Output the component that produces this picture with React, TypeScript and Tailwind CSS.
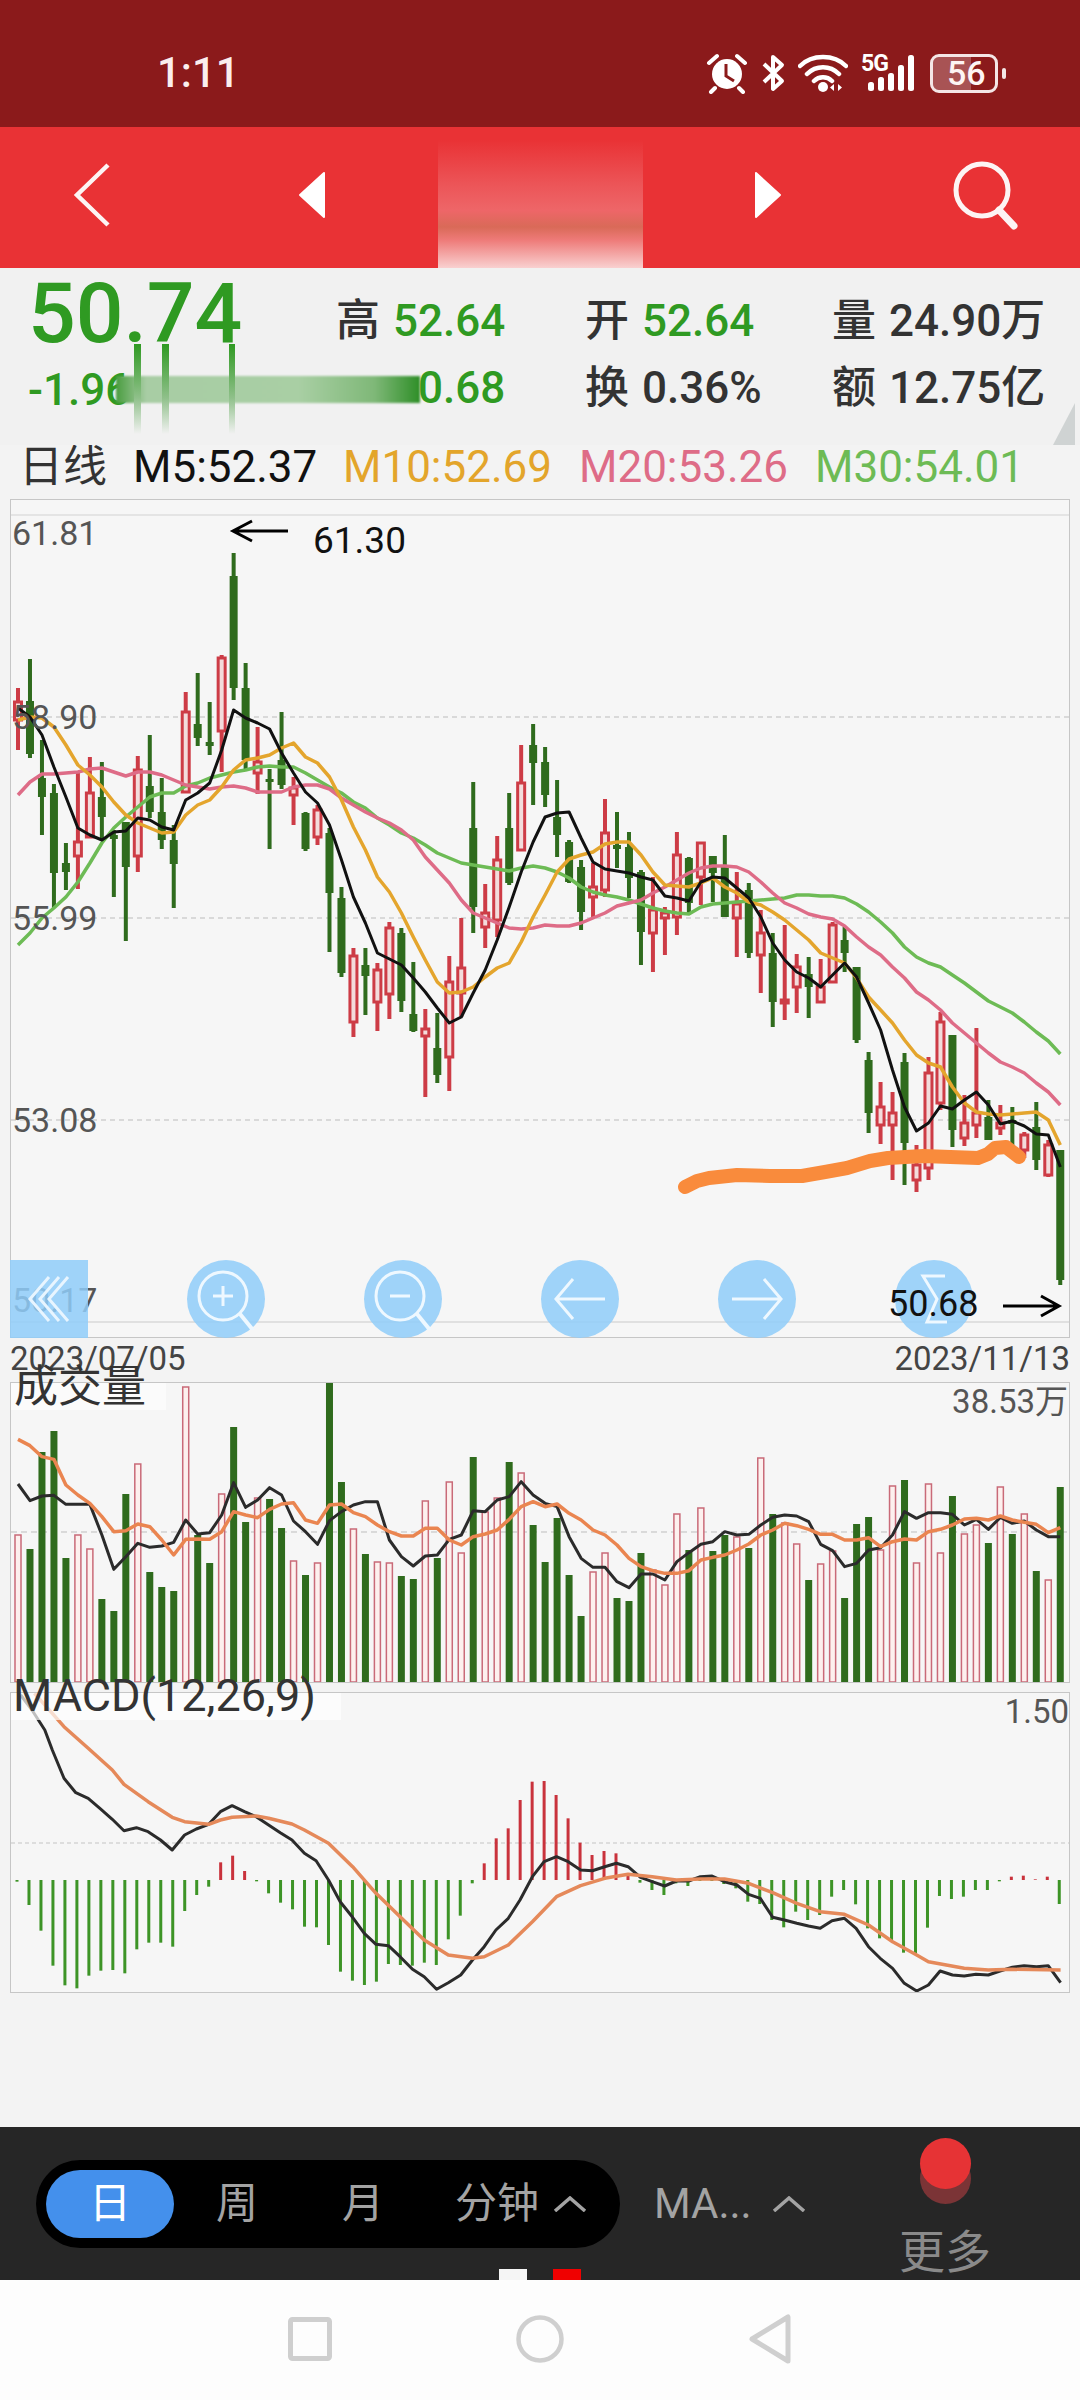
const candles: [string, number, number, number, number][] = [
  ["r", 688, 702, 720, 750], ["g", 659, 701, 754, 758], ["g", 740, 778, 797, 835], ["g", 784, 793, 873, 908],
  ["g", 843, 863, 872, 890], ["r", 773, 842, 856, 889], ["r", 757, 793, 837, 838], ["g", 762, 797, 817, 840],
  ["g", 830, 835, 839, 897], ["g", 822, 822, 867, 941], ["r", 756, 770, 856, 872], ["g", 735, 786, 812, 818],
  ["g", 778, 812, 840, 849], ["g", 825, 840, 864, 908], ["r", 692, 712, 792, 793], ["g", 673, 724, 738, 746],
  ["g", 702, 742, 746, 755], ["r", 655, 658, 731, 772], ["g", 553, 576, 688, 700], ["g", 663, 688, 760, 769],
  ["r", 727, 762, 773, 794], ["g", 769, 779, 782, 849], ["g", 712, 760, 785, 789], ["r", 777, 788, 795, 825],
  ["g", 812, 813, 849, 851], ["r", 805, 810, 837, 845], ["g", 828, 833, 893, 952], ["g", 887, 898, 973, 977],
  ["r", 948, 956, 1022, 1037], ["g", 948, 965, 976, 1015], ["r", 963, 970, 1002, 1031], ["r", 922, 928, 994, 1019],
  ["g", 928, 933, 1001, 1012], ["g", 962, 1014, 1031, 1032], ["r", 1009, 1029, 1036, 1097], ["g", 1013, 1048, 1075, 1083],
  ["r", 956, 982, 1057, 1091], ["r", 918, 968, 993, 1017], ["g", 782, 828, 907, 933], ["r", 884, 913, 927, 948],
  ["r", 836, 860, 920, 937], ["g", 793, 828, 883, 885], ["r", 745, 783, 850, 850], ["g", 724, 745, 763, 805],
  ["g", 747, 762, 795, 807], ["g", 780, 817, 835, 857], ["g", 840, 842, 882, 883], ["g", 860, 867, 912, 930],
  ["r", 863, 887, 897, 917], ["r", 799, 833, 890, 897], ["g", 812, 845, 849, 868], ["g", 832, 847, 878, 898],
  ["g", 870, 872, 932, 965], ["r", 877, 910, 933, 972], ["r", 907, 913, 918, 955], ["r", 832, 855, 917, 935],
  ["g", 857, 858, 903, 915], ["r", 842, 843, 877, 905], ["g", 856, 856, 873, 902], ["g", 835, 867, 917, 917],
  ["r", 872, 904, 918, 957], ["g", 883, 890, 953, 958], ["r", 910, 933, 955, 993], ["g", 933, 953, 1002, 1027],
  ["r", 925, 1000, 1003, 1020], ["r", 954, 967, 987, 1013], ["g", 957, 974, 987, 1018], ["r", 959, 987, 1002, 1002],
  ["r", 922, 925, 982, 982], ["g", 927, 940, 953, 972], ["g", 967, 967, 1040, 1043], ["g", 1052, 1060, 1113, 1133],
  ["r", 1082, 1107, 1125, 1144], ["r", 1092, 1113, 1125, 1180], ["g", 1053, 1062, 1143, 1185], ["r", 1145, 1165, 1180, 1192],
  ["r", 1057, 1073, 1168, 1180], ["r", 1012, 1022, 1103, 1110], ["g", 1035, 1035, 1130, 1147], ["r", 1095, 1123, 1138, 1146],
  ["r", 1028, 1113, 1125, 1138], ["g", 1100, 1117, 1140, 1140], ["r", 1105, 1123, 1128, 1135], ["g", 1107, 1120, 1124, 1153],
  ["r", 1132, 1135, 1150, 1158], ["g", 1102, 1127, 1160, 1170], ["r", 1140, 1145, 1175, 1177], ["g", 1150, 1150, 1280, 1285],
];

const ma5 = [708, 717, 735, 767, 797, 828, 835, 840, 832, 831, 818, 820, 827, 830, 800, 793, 783, 750, 710, 718, 723, 729, 753, 773, 792, 803, 825, 860, 897, 923, 953, 959, 965, 978, 992, 1008, 1023, 1017, 993, 970, 940, 907, 872, 842, 817, 813, 812, 838, 862, 869, 871, 873, 877, 880, 896, 898, 901, 882, 877, 878, 888, 898, 917, 943, 960, 972, 978, 987, 975, 963, 977, 1003, 1030, 1070, 1107, 1131, 1123, 1106, 1109, 1100, 1092, 1105, 1124, 1121, 1126, 1134, 1135, 1167];
const ma10 = [720, 717, 718, 727, 745, 765, 775, 787, 802, 815, 823, 828, 833, 832, 815, 805, 800, 787, 770, 760, 758, 755, 748, 743, 757, 763, 777, 800, 827, 850, 877, 892, 913, 937, 960, 982, 993, 992, 987, 977, 968, 963, 942, 917, 895, 872, 859, 855, 852, 844, 842, 842, 855, 872, 885, 886, 887, 883, 878, 887, 893, 902, 905, 912, 920, 930, 940, 953, 958, 963, 978, 997, 1010, 1023, 1040, 1055, 1063, 1067, 1087, 1103, 1112, 1114, 1115, 1114, 1113, 1112, 1120, 1145];
const ma20 = [795, 782, 774, 774, 773, 772, 769, 768, 772, 776, 772, 772, 775, 780, 785, 787, 789, 787, 786, 788, 792, 792, 792, 787, 785, 785, 789, 798, 805, 812, 818, 823, 830, 840, 857, 870, 883, 900, 913, 918, 923, 928, 929, 928, 925, 926, 926, 923, 918, 913, 906, 903, 900, 893, 887, 880, 873, 868, 866, 866, 867, 872, 882, 893, 903, 908, 914, 917, 919, 926, 937, 947, 955, 967, 978, 992, 1000, 1010, 1023, 1033, 1043, 1053, 1062, 1067, 1073, 1083, 1092, 1105];
const ma30 = [945, 933, 918, 908, 897, 882, 863, 843, 828, 817, 807, 797, 793, 793, 786, 783, 778, 775, 772, 770, 767, 766, 767, 767, 773, 780, 787, 793, 802, 808, 818, 825, 833, 838, 845, 853, 858, 863, 865, 867, 869, 871, 868, 866, 868, 872, 878, 887, 892, 895, 897, 900, 904, 908, 911, 913, 914, 907, 904, 903, 902, 901, 900, 899, 898, 895, 895, 896, 896, 898, 904, 912, 922, 933, 947, 957, 963, 967, 975, 983, 992, 1001, 1007, 1013, 1022, 1032, 1041, 1054];

const volTops = [1535, 1549, 1452, 1431, 1558, 1535, 1549, 1599, 1611, 1494, 1464, 1572, 1587, 1591, 1387, 1535, 1563, 1494, 1427, 1522, 1498, 1499, 1528, 1561, 1575, 1563, 1382, 1482, 1529, 1554, 1562, 1563, 1576, 1579, 1501, 1558, 1482, 1553, 1457, 1512, 1498, 1462, 1473, 1525, 1562, 1518, 1575, 1616, 1572, 1553, 1598, 1601, 1553, 1570, 1585, 1514, 1550, 1508, 1551, 1535, 1537, 1548, 1458, 1514, 1523, 1544, 1580, 1564, 1551, 1598, 1524, 1517, 1550, 1486, 1480, 1563, 1484, 1553, 1496, 1534, 1525, 1543, 1487, 1534, 1514, 1571, 1580, 1487];
const volBlack = [372, 422, 408, 406, 433, 433, 433, 525, 628, 590, 550, 562, 558, 547, 480, 522, 518, 465, 368, 442, 420, 383, 405, 483, 515, 553, 482, 455, 435, 425, 425, 540, 590, 618, 588, 585, 538, 525, 452, 455, 420, 410, 365, 405, 430, 440, 530, 595, 622, 622, 665, 683, 642, 642, 660, 605, 578, 553, 545, 515, 525, 523, 495, 472, 465, 468, 485, 553, 572, 620, 610, 570, 563, 525, 455, 475, 458, 458, 463, 495, 478, 508, 472, 490, 483, 510, 530, 530];
const volOrange = [238, 257, 290, 298, 375, 405, 430, 470, 515, 512, 492, 500, 540, 585, 538, 537, 538, 515, 455, 465, 473, 448, 432, 428, 480, 490, 435, 432, 458, 470, 495, 515, 528, 528, 505, 505, 540, 555, 530, 522, 510, 478, 440, 425, 440, 432, 460, 480, 510, 525, 555, 595, 620, 632, 640, 640, 632, 600, 592, 585, 570, 552, 525, 510, 490, 497, 508, 523, 523, 540, 540, 533, 560, 545, 537, 540, 515, 508, 495, 477, 475, 480, 468, 480, 487, 493, 518, 503];

// histogram ends, 601 is the zero line in the crop I measured from
const macdHist = [605, 675, 752, 857, 916, 925, 887, 872, 870, 880, 808, 788, 788, 800, 693, 645, 620, 547, 527, 573, 604, 640, 668, 688, 740, 742, 795, 875, 902, 915, 905, 852, 855, 857, 848, 855, 778, 707, 610, 550, 475, 445, 360, 305, 303, 345, 415, 488, 525, 513, 520, 580, 608, 630, 645, 610, 618, 603, 603, 612, 625, 665, 672, 720, 742, 695, 720, 705, 650, 630, 673, 745, 775, 785, 818, 820, 743, 648, 657, 650, 630, 630, 604, 590, 587, 598, 590, 672];
const macdBlack: [number, number][] = [[30, 45], [48, 95], [65, 150], [76, 210], [93, 295], [110, 338], [128, 355], [145, 385], [163, 418], [180, 452], [198, 443], [215, 455], [233, 480], [250, 510], [268, 465], [285, 447], [303, 433], [320, 395], [337, 377], [355, 395], [372, 410], [390, 435], [407, 458], [424, 480], [442, 520], [459, 542], [477, 600], [494, 665], [512, 712], [529, 760], [546, 793], [564, 797], [581, 830], [599, 868], [616, 890], [634, 928], [651, 908], [669, 885], [686, 840], [703, 800], [720, 750], [738, 715], [755, 660], [773, 590], [790, 545], [808, 530], [825, 545], [843, 570], [860, 572], [878, 560], [895, 550], [912, 560], [930, 592], [947, 605], [965, 618], [982, 603], [1000, 603], [1017, 590], [1034, 588], [1052, 605], [1070, 615], [1087, 643], [1104, 655], [1122, 712], [1139, 720], [1157, 730], [1174, 738], [1191, 745], [1208, 722], [1226, 715], [1243, 745], [1261, 800], [1278, 835], [1296, 865], [1313, 910], [1331, 933], [1348, 915], [1365, 873], [1383, 885], [1400, 888], [1417, 883], [1435, 885], [1452, 873], [1470, 862], [1487, 857], [1505, 860], [1522, 857], [1540, 908]];
const macdOrange: [number, number][] = [[50, 40], [76, 100], [93, 140], [128, 205], [163, 270], [180, 313], [215, 365], [250, 412], [268, 425], [303, 433], [320, 420], [337, 412], [372, 408], [390, 415], [424, 432], [442, 450], [477, 490], [512, 560], [546, 640], [581, 710], [616, 780], [651, 825], [686, 835], [703, 830], [738, 795], [773, 725], [808, 650], [843, 617], [878, 595], [912, 583], [947, 590], [982, 600], [1017, 597], [1052, 597], [1087, 610], [1122, 638], [1157, 670], [1191, 695], [1226, 703], [1261, 735], [1296, 785], [1331, 825], [1348, 845], [1400, 865], [1435, 870], [1470, 868], [1540, 870]];

const barX = (i: number) => 18 + 11.98 * i;
const line = (ys: number[]) => ys.map((y, i) => `${barX(i).toFixed(1)},${y}`).join(" ");
const volY = (z: number) => 1360 + z / 3;
const macdPts = (pts: [number, number][]) =>
  pts.map(([x, y]) => `${(x / 1.452).toFixed(1)},${(1680 + y / 3).toFixed(1)}`).join(" ");

const GREEN = "#2f6b1d";
const RED = "#cd3c46";

function KLine() {
  return (
    <svg viewBox="11 500 1058 837" className="block w-full h-full">
      <line x1="11" y1="515" x2="1069" y2="515" stroke="#dedede" strokeWidth="1.5" />
      <line x1="11" y1="1322" x2="1069" y2="1322" stroke="#d8d8d8" strokeWidth="1.5" />
      {[717, 918, 1120].map((y) => (
        <line key={y} x1="11" y1={y} x2="1069" y2={y} stroke="#cfcfcf" strokeWidth="1.5" strokeDasharray="5 4" />
      ))}
      {candles.map(([c, hi, top, bot, lo], i) => {
        const x = barX(i);
        if (c === "g") {
          return (
            <g key={i} fill={GREEN}>
              <rect x={x - 2} y={hi} width="4" height={lo - hi} />
              <rect x={x - 4} y={top} width="8" height={Math.max(bot - top, 3)} />
            </g>
          );
        }
        return (
          <g key={i}>
            <line x1={x} y1={hi} x2={x} y2={top} stroke={RED} strokeWidth="4" />
            <line x1={x} y1={bot} x2={x} y2={lo} stroke={RED} strokeWidth="4" />
            <rect x={x - 3.5} y={top} width="7" height={Math.max(bot - top, 2)} fill="#f3dcdc" stroke={RED} strokeWidth="3" />
          </g>
        );
      })}
      <polyline points={line(ma30)} fill="none" stroke="#6dbb55" strokeWidth="3.5" strokeLinejoin="round" />
      <polyline points={line(ma20)} fill="none" stroke="#de6c87" strokeWidth="3.5" strokeLinejoin="round" />
      <polyline points={line(ma10)} fill="none" stroke="#e4a52d" strokeWidth="3.5" strokeLinejoin="round" />
      <polyline points={line(ma5)} fill="none" stroke="#111111" strokeWidth="3" strokeLinejoin="round" />
      <polyline
        points="685,1187 697,1181 709,1178 737,1175 770,1176 802,1176 825,1172 847,1168 870,1161 888,1158 923,1156 978,1158 988,1154 995,1148 1006,1147 1019,1157"
        fill="none"
        stroke="#f98b3c"
        strokeWidth="14"
        strokeLinecap="round"
        strokeLinejoin="round"
      />
      <path d="M288 531H233M252 521L233 531L252 541" fill="none" stroke="#000" strokeWidth="3" />
      <path d="M1003 1306H1059M1041 1296L1059 1306L1041 1316" fill="none" stroke="#000" strokeWidth="3" />
    </svg>
  );
}

function VolumeChart() {
  return (
    <svg viewBox="11 1383 1058 299" className="block w-full h-full">
      <line x1="11" y1="1532" x2="1069" y2="1532" stroke="#bdbdbd" strokeWidth="1" strokeDasharray="6 4" />
      {volTops.map((top, i) => {
        const x = barX(i);
        const up = candles[i][0] === "r";
        return up ? (
          <rect key={i} x={x - 3} y={top} width="6" height={1682 - top} fill="#fdf0ee" stroke="#c96a78" strokeWidth="1.5" />
        ) : (
          <rect key={i} x={x - 3.5} y={top} width="7" height={1682 - top} fill={GREEN} />
        );
      })}
      <polyline points={line(volBlack.map(volY))} fill="none" stroke="#2b2b2b" strokeWidth="3" strokeLinejoin="round" />
      <polyline points={line(volOrange.map(volY))} fill="none" stroke="#ea8550" strokeWidth="3.5" strokeLinejoin="round" />
    </svg>
  );
}

function MacdChart() {
  return (
    <svg viewBox="11 1693 1058 299" className="block w-full h-full">
      <line x1="11" y1="1843" x2="1069" y2="1843" stroke="#c4c4c4" strokeWidth="1" strokeDasharray="4 3" />
      {macdHist.map((z, i) => {
        const x = barX(i) - 1;
        const y = 1680 + z / 3;
        return <rect key={i} x={x - 1.5} y={Math.min(y, 1880)} width="3" height={Math.abs(y - 1880)} fill={z < 601 ? "#c9323c" : "#3d9426"} />;
      })}
      <polyline points={macdPts(macdBlack)} fill="none" stroke="#2b2b2b" strokeWidth="3" strokeLinejoin="round" />
      <polyline points={macdPts(macdOrange)} fill="none" stroke="#e5895a" strokeWidth="3.5" strokeLinejoin="round" />
    </svg>
  );
}

function StatusIcons() {
  return (
    <div className="flex items-center gap-[13px] mr-[74px] text-white">
      <svg width="42" height="42" viewBox="0 0 42 42">
        <circle cx="21" cy="22" r="15" fill="#fff" />
        <path d="M20 12V24L28 29" fill="none" stroke="#8b1a1a" strokeWidth="3" />
        <path d="M3 11L11 4M39 11L31 4M9 36L5 40M33 36L37 40" stroke="#fff" strokeWidth="4" strokeLinecap="round" />
      </svg>
      <svg width="24" height="38" viewBox="0 0 24 38">
        <path d="M3 10L21 27L12 35V3L21 11L3 28" fill="none" stroke="#fff" strokeWidth="4" strokeLinejoin="round" />
      </svg>
      <svg width="50" height="38" viewBox="0 0 50 38">
        <path d="M2 12C14 0 36 0 48 12M9 20C18 11 32 11 41 20M16 27C21 22 29 22 34 27" fill="none" stroke="#fff" strokeWidth="4.5" strokeLinecap="round" />
        <circle cx="25" cy="33" r="5" fill="#fff" />
        <path d="M36 30V37L32 33.5ZM40 30V37L44 33.5Z" fill="#fff" />
      </svg>
      <div className="relative w-[56px] h-[38px]">
        <span className="absolute left-0 top-[-2px] text-[23px] leading-none font-bold tracking-[-1px]">5G</span>
        <svg width="56" height="38" viewBox="0 0 56 38" className="block">
          <g fill="#fff">
            <rect x="7" y="28" width="6" height="9" rx="2.5" />
            <rect x="17" y="23" width="6" height="14" rx="2.5" />
            <rect x="27" y="19" width="6" height="18" rx="2.5" />
            <rect x="37" y="11" width="6" height="26" rx="2.5" />
            <rect x="47" y="1" width="6" height="36" rx="2.5" />
          </g>
        </svg>
      </div>
      <div className="flex items-center gap-[4px]">
        <div className="w-[68px] h-[39px] rounded-[9px] border-[3px] border-[#f4e6e6] flex items-center overflow-hidden relative">
          <div className="absolute left-0 top-0 bottom-0 w-[38px] bg-white/25" />
          <span className="relative ml-[14px] text-[34px] leading-none font-medium text-[#fdf4f4]">56</span>
        </div>
        <div className="w-[4px] h-[11px] rounded-full bg-[#f4e6e6]" />
      </div>
    </div>
  );
}

function Header() {
  return (
    <div className="h-[141px] bg-[#e93235] flex items-center relative pb-[6px]">
      <svg width="40" height="64" viewBox="0 0 40 64" className="ml-[73px]">
        <path d="M35 2L4 32L35 62" fill="none" stroke="#fdf4f4" strokeWidth="4.5" />
      </svg>
      <svg width="30" height="48" viewBox="0 0 30 48" className="ml-[184px]">
        <path d="M27 2V46L3 24Z" fill="#fff" stroke="#fff" strokeWidth="2" strokeLinejoin="round" />
      </svg>
      <div className="w-[205px] h-[128px] ml-[111px] self-end -mb-[6px] bg-[linear-gradient(180deg,#e93235_0%,#ec5558_35%,#ee6668_55%,#d96a58_68%,#ee7a78_78%,#f9d0d0_100%)]" />
      <svg width="30" height="48" viewBox="0 0 30 48" className="ml-[110px]">
        <path d="M3 2V46L27 24Z" fill="#fff" stroke="#fff" strokeWidth="2" strokeLinejoin="round" />
      </svg>
      <svg width="68" height="70" viewBox="0 0 68 70" className="ml-[168px]">
        <circle cx="31" cy="30" r="26" fill="none" stroke="#fdf4f4" strokeWidth="5" />
        <path d="M48 50L63 66" fill="none" stroke="#fdf4f4" strokeWidth="7" strokeLinecap="round" />
      </svg>
    </div>
  );
}

function Quote() {
  return (
    <div className="h-[177px] bg-[#f1f1f1] flex relative overflow-hidden text-[44px] leading-none font-medium text-[#333333]">
      <div className="w-[336px] pl-[28px] shrink-0">
        <div className="text-[84px] leading-none mt-[4px] text-[#2f9a22]">50.74</div>
        <div className="mt-[12px] text-[#2f9a22]">-1.96</div>
      </div>
      <div className="grid grid-cols-[249px_247px_1fr] grid-rows-[67px_67px] pt-[19px] items-center">
        <div className="flex gap-[13px] items-center">
          <span>高</span>
          <span className="text-[#2f9a22]">52.64</span>
        </div>
        <div className="flex gap-[13px] items-center">
          <span>开</span>
          <span className="text-[#2f9a22]">52.64</span>
        </div>
        <div className="flex gap-[13px] items-center">
          <span>量</span>
          <span>24.90万</span>
        </div>
        <div className="pl-[82px] text-[#2f9a22]">0.68</div>
        <div className="flex gap-[13px] items-center">
          <span>换</span>
          <span>0.36%</span>
        </div>
        <div className="flex gap-[13px] items-center">
          <span>额</span>
          <span>12.75亿</span>
        </div>
      </div>
      {/* smeared out part of the row */}
      <div className="absolute left-[116px] top-[108px] w-[304px] h-[27px] blur-[1px] bg-[linear-gradient(90deg,#4a9d40_0%,#a8cda4_10%,#a9cfa4_60%,#7fb878_85%,#2f8f28_100%)]" />
      <div className="absolute left-[134px] top-[76px] w-[7px] h-[90px] bg-[linear-gradient(180deg,#2f9a22,#8fc08a_60%,#f1f1f1)]" />
      <div className="absolute left-[162px] top-[76px] w-[7px] h-[90px] bg-[linear-gradient(180deg,#2f9a22,#8fc08a_60%,#f1f1f1)]" />
      <div className="absolute left-[229px] top-[76px] w-[6px] h-[90px] bg-[linear-gradient(180deg,#2f9a22,#8fc08a_60%,#f1f1f1)]" />
      <svg width="22" height="42" viewBox="0 0 22 42" className="absolute right-[5px] bottom-0">
        <path d="M22 0V42H0Z" fill="#cfd3d3" />
      </svg>
    </div>
  );
}

function MaLegend() {
  return (
    <div className="h-[54px] flex items-center text-[44px] leading-none pb-[11px]">
      <span className="ml-[19px] w-[114px] text-[#333333]">日线</span>
      <span className="w-[210px] text-[#111111]">M5:52.37</span>
      <span className="w-[236px] text-[#e3a52b]">M10:52.69</span>
      <span className="w-[236px] text-[#de6c87]">M20:53.26</span>
      <span className="text-[#6dbb55]">M30:54.01</span>
    </div>
  );
}

function ChartButtons() {
  const circle = "w-[78px] h-[78px] rounded-full bg-[#8fccf9]/85 flex items-center justify-center";
  return (
    <div className="absolute left-[-1px] bottom-[-1px] flex gap-[99px]">
      <div className="w-[78px] h-[78px] bg-[#8fccf9]/85 flex items-center justify-center">
        <svg width="44" height="50" viewBox="0 0 44 50" fill="none" stroke="#e8f5ff" strokeWidth="3">
          <path d="M22 3L3 25L22 47M32 3L13 25L32 47M41 3L22 25L41 47" />
        </svg>
      </div>
      <div className={circle}>
        <svg width="62" height="62" viewBox="0 0 62 62" fill="none" stroke="#eef8ff" strokeWidth="3">
          <circle cx="28" cy="28" r="24" />
          <path d="M45 46L58 62" strokeWidth="4" />
          <path d="M18 28H38M28 18V38" />
        </svg>
      </div>
      <div className={circle}>
        <svg width="62" height="62" viewBox="0 0 62 62" fill="none" stroke="#eef8ff" strokeWidth="3">
          <circle cx="28" cy="28" r="24" />
          <path d="M45 46L58 62" strokeWidth="4" />
          <path d="M18 28H38" />
        </svg>
      </div>
      <div className={circle}>
        <svg width="54" height="46" viewBox="0 0 54 46" fill="none" stroke="#eef8ff" strokeWidth="3">
          <path d="M52 23H3M20 3L3 23L20 43" />
        </svg>
      </div>
      <div className={circle}>
        <svg width="54" height="46" viewBox="0 0 54 46" fill="none" stroke="#eef8ff" strokeWidth="3">
          <path d="M2 23H51M34 3L51 23L34 43" />
        </svg>
      </div>
      <div className={circle}>
        <svg width="34" height="52" viewBox="0 0 34 52" fill="none" stroke="#eef8ff" strokeWidth="3">
          <path d="M28 3H6L20 26L10 49H30" />
        </svg>
      </div>
    </div>
  );
}

function Chevron() {
  return (
    <svg width="34" height="16" viewBox="0 0 34 16" fill="none" stroke="#a3a3a3" strokeWidth="3.5">
      <path d="M2 15L17 2L32 15" />
    </svg>
  );
}

function BottomBar() {
  return (
    <div className="h-[153px] bg-[#262626] flex items-center relative text-[42px] leading-none text-[#a3a3a3]">
      <div className="ml-[36px] w-[584px] h-[88px] rounded-[44px] bg-black flex items-center pl-[10px]">
        <div className="w-[128px] h-[68px] rounded-[34px] bg-[#4490ec] flex items-center justify-center text-white">日</div>
        <div className="w-[126px] text-center">周</div>
        <div className="w-[126px] text-center">月</div>
        <div className="ml-[29px] flex items-center gap-[14px]">
          <span>分钟</span>
          <Chevron />
        </div>
      </div>
      <div className="ml-[34px] flex items-center gap-[20px]">
        <span>MA...</span>
        <Chevron />
      </div>
      <div className="ml-auto mr-[90px] w-[90px] h-[153px] flex flex-col items-center pt-[11px]">
        <div className="relative w-[51px] h-[66px] shrink-0">
          <div className="absolute left-0 bottom-0 w-[51px] h-[51px] rounded-full bg-[#7b3436]" />
          <div className="absolute left-0 top-0 w-[51px] h-[51px] rounded-full bg-[#e63335]" />
        </div>
        <span className="mt-[25px] text-[46px] whitespace-nowrap text-[#8a8a8a]">更多</span>
      </div>
      <div className="absolute left-[499px] bottom-0 flex gap-[26px]">
        <div className="w-[28px] h-[11px] bg-[#f5f5f5]" />
        <div className="w-[28px] h-[11px] bg-[#f00000]" />
      </div>
    </div>
  );
}

export default function App() {
  return (
    <div className="w-[1080px] h-[2400px] flex flex-col bg-[#f3f3f3] overflow-hidden font-['Roboto','Noto_Sans_CJK_SC',sans-serif]">
      <div className="h-[127px] bg-[#8b1a1b] flex items-center justify-between pt-[19px]">
        <span className="ml-[157px] text-[42px] leading-none font-medium text-[#fbeeee]">1:11</span>
        <StatusIcons />
      </div>
      <Header />
      <Quote />
      <MaLegend />

      <div className="relative mx-[10px] h-[839px] border border-[#c6c6c6] bg-[#f6f6f6] text-[34px] leading-none">
        <KLine />
        <span className="absolute left-[1px] top-[16px] text-[#555555]">61.81</span>
        <span className="absolute left-[1px] top-[200px] text-[#555555]">58.90</span>
        <span className="absolute left-[1px] top-[401px] text-[#555555]">55.99</span>
        <span className="absolute left-[1px] top-[603px] text-[#555555]">53.08</span>
        <span className="absolute left-[1px] top-[783px] text-[#555555]">50.17</span>
        <span className="absolute left-[302px] top-[22px] text-[37px] text-[#111111]">61.30</span>
        <ChartButtons />
        <span className="absolute left-[877px] top-[786px] text-[36px] text-[#111111]">50.68</span>
      </div>

      <div className="h-[44px] mx-[10px] flex justify-between pt-[4px] text-[33px] leading-none text-[#444444]">
        <span>2023/07/05</span>
        <span>2023/11/13</span>
      </div>

      <div className="relative mx-[10px] h-[301px] border border-[#c6c6c6] bg-[#f6f6f6]">
        <VolumeChart />
        <div className="absolute left-0 top-0 w-[155px] h-[27px] bg-white/60" />
        <span className="absolute left-[3px] top-[-18px] text-[44px] leading-none text-[#333333]">成交量</span>
        <span className="absolute right-[1px] top-[2px] text-[33px] leading-none text-[#555555]">38.53万</span>
      </div>

      <div className="relative mx-[10px] mt-[9px] h-[301px] border border-[#c6c6c6] bg-[#f6f6f6]">
        <MacdChart />
        <div className="absolute left-0 top-0 w-[330px] h-[27px] bg-white/70" />
        <span className="absolute left-[2px] top-[-20px] text-[45px] leading-none text-[#333333]">MACD(12,26,9)</span>
        <span className="absolute right-0 top-[2px] text-[33px] leading-none text-[#555555]">1.50</span>
      </div>

      <div className="flex-1" />
      <BottomBar />

      <div className="h-[120px] bg-[#fdfdfd] flex items-center pb-[2px]">
        <svg width="44" height="44" viewBox="0 0 44 44" className="ml-[288px]">
          <rect x="2.5" y="2.5" width="39" height="39" rx="2" fill="none" stroke="#cfcfcf" strokeWidth="5" />
        </svg>
        <svg width="48" height="48" viewBox="0 0 48 48" className="ml-[184px]">
          <circle cx="24" cy="24" r="21.5" fill="none" stroke="#cfcfcf" strokeWidth="4.5" />
        </svg>
        <svg width="44" height="50" viewBox="0 0 44 50" className="ml-[184px]">
          <path d="M40 3V47L4 25Z" fill="none" stroke="#cfcfcf" strokeWidth="5" strokeLinejoin="round" />
        </svg>
      </div>
    </div>
  );
}
